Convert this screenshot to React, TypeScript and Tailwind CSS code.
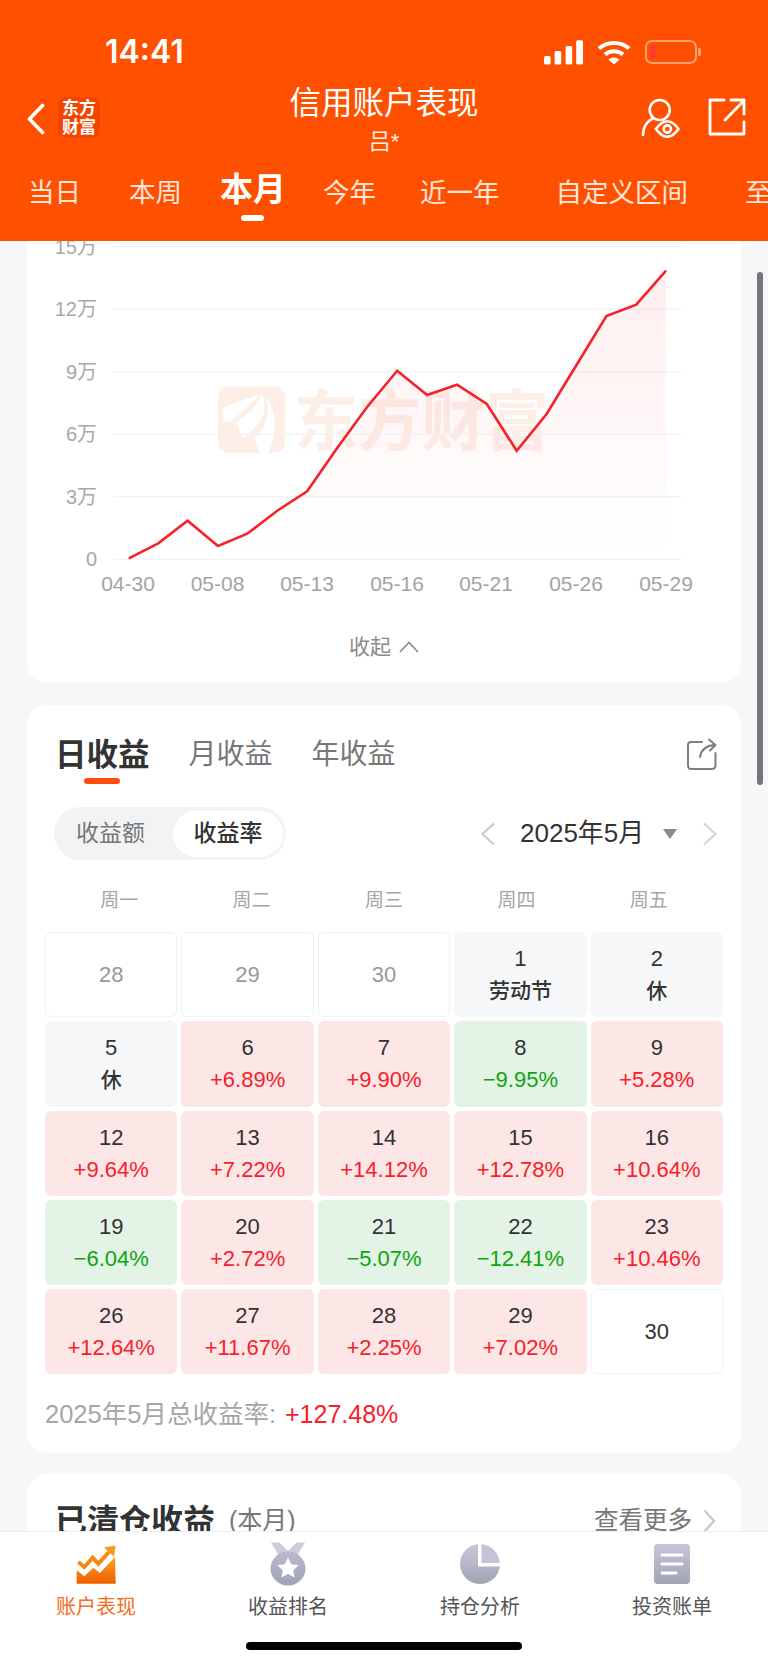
import React from 'react'

const pts: [number, number][] = [
  [101.8, 317.3], [131.2, 302.3], [160.6, 279.7], [191, 305], [220.3, 292.7], [250.2, 269.7], [280.1, 250.3],
  [310, 207.3], [340.3, 165.7], [370.2, 129.7], [400.1, 154], [430, 143.7], [459.8, 163], [489.7, 209.7],
  [519.6, 173], [549.5, 124], [579.4, 75], [609.2, 63.7], [639, 29.7],
]
const linePts = pts.map((p) => p.join(',')).join(' ')
const areaPts = `${linePts} 639,318.3 101.8,318.3`

const yAxis = [
  { label: '15万', y: 5.7 },
  { label: '12万', y: 68.3 },
  { label: '9万', y: 130.7 },
  { label: '6万', y: 193 },
  { label: '3万', y: 255.7 },
  { label: '0', y: 318.3 },
]
const xAxis = [
  { label: '04-30', x: 101 },
  { label: '05-08', x: 190.5 },
  { label: '05-13', x: 280 },
  { label: '05-16', x: 370 },
  { label: '05-21', x: 459 },
  { label: '05-26', x: 549 },
  { label: '05-29', x: 639 },
]

type Cell = { day: string; sub?: string; kind: 'prev' | 'off' | 'up' | 'down' | 'blank' }

const cells: Cell[] = [
  { day: '28', kind: 'prev' },
  { day: '29', kind: 'prev' },
  { day: '30', kind: 'prev' },
  { day: '1', sub: '劳动节', kind: 'off' },
  { day: '2', sub: '休', kind: 'off' },
  { day: '5', sub: '休', kind: 'off' },
  { day: '6', sub: '+6.89%', kind: 'up' },
  { day: '7', sub: '+9.90%', kind: 'up' },
  { day: '8', sub: '−9.95%', kind: 'down' },
  { day: '9', sub: '+5.28%', kind: 'up' },
  { day: '12', sub: '+9.64%', kind: 'up' },
  { day: '13', sub: '+7.22%', kind: 'up' },
  { day: '14', sub: '+14.12%', kind: 'up' },
  { day: '15', sub: '+12.78%', kind: 'up' },
  { day: '16', sub: '+10.64%', kind: 'up' },
  { day: '19', sub: '−6.04%', kind: 'down' },
  { day: '20', sub: '+2.72%', kind: 'up' },
  { day: '21', sub: '−5.07%', kind: 'down' },
  { day: '22', sub: '−12.41%', kind: 'down' },
  { day: '23', sub: '+10.46%', kind: 'up' },
  { day: '26', sub: '+12.64%', kind: 'up' },
  { day: '27', sub: '+11.67%', kind: 'up' },
  { day: '28', sub: '+2.25%', kind: 'up' },
  { day: '29', sub: '+7.02%', kind: 'up' },
  { day: '30', kind: 'blank' },
]

const topTabs = [
  { label: '当日', cls: 'ml-[28px] text-[26.5px] text-white/85' },
  { label: '本周', cls: 'ml-[48px] text-[26.5px] text-white/85' },
  { label: '本月', cls: 'ml-[38px] text-[33px] font-bold text-white -translate-y-[4px]' },
  { label: '今年', cls: 'ml-[37px] text-[26.5px] text-white/85' },
  { label: '近一年', cls: 'ml-[44px] text-[26.5px] text-white/85' },
  { label: '自定义区间', cls: 'ml-[56px] text-[26.5px] text-white/85' },
  { label: '至', cls: 'ml-[57px] text-[26.5px] text-white/85' },
]

function StatusIcons() {
  return (
    <div className="flex items-center">
      <svg width="40" height="25" viewBox="0 0 40 25" fill="#fff">
        <rect x="0" y="16" width="6.6" height="8.5" rx="1.6" />
        <rect x="10.6" y="11" width="6.6" height="13.5" rx="1.6" />
        <rect x="21.6" y="6" width="6.6" height="18.5" rx="1.6" />
        <rect x="32.2" y="0.3" width="6.8" height="24.2" rx="1.6" />
      </svg>
      <svg className="ml-[13px]" width="34" height="25" viewBox="0 0 34 25" fill="none" stroke="#fff" strokeWidth="4">
        <path d="M2 8.5C10 1 24 1 32 8.5" />
        <path d="M8 14.5C13 10 21 10 26 14.5" />
        <path d="M11.5 19.5Q17 15.5 22.5 19.5L17 24.5Z" fill="#fff" stroke="none" />
      </svg>
      <div className="ml-[14px] flex items-center">
        <div className="flex h-[24px] w-[52px] items-center rounded-[7px] border-2 border-white/45 pl-[3px]">
          <div className="h-[14px] w-[6px] rounded-[2px] bg-[#ff3b30]" />
        </div>
        <div className="ml-[1px] h-[8px] w-[3px] rounded-r-[2px] bg-white/45" />
      </div>
    </div>
  )
}

function Header() {
  return (
    <header className="h-[241px] flex-none overflow-hidden bg-[#ff5000] text-white">
      <div className="flex h-[80px] items-center justify-between pt-[24px] pl-[105px] pr-[67px]">
        <span className="font-['Inter',sans-serif] text-[32px] font-semibold">14:41</span>
        <StatusIcons />
      </div>
      <div className="grid h-[93px] grid-cols-[1fr_auto_1fr]">
        <div className="flex items-start pl-[27px] pt-[17px]">
          <svg className="mt-[6px]" width="18" height="32" viewBox="0 0 18 32" fill="none" stroke="#fff" strokeWidth="3.6" strokeLinecap="round" strokeLinejoin="round">
            <path d="M15.5 2.5L2.5 16L15.5 29.5" />
          </svg>
          <div className="ml-[13px] flex h-[41px] w-[42px] flex-col items-center justify-center rounded-[8px] bg-[#f24600] text-[17px] font-bold leading-[19px]">
            <span>东方</span>
            <span>财富</span>
          </div>
        </div>
        <div className="flex flex-col items-center">
          <div className="h-[46px] text-[31.5px] leading-[46px]">信用账户表现</div>
          <div className="mt-[2px] h-[28px] text-[22px] leading-[28px] text-white/90">吕*</div>
        </div>
        <div className="flex items-start justify-end pt-[18px] pr-[22px]">
          <svg width="40" height="40" viewBox="0 0 40 40" fill="none" stroke="#fff" strokeWidth="2.6" strokeLinecap="round">
            <circle cx="18.7" cy="12" r="10" />
            <path d="M2 37C2 29 6 23.5 11.5 20.5" />
            <path d="M15 31Q26.3 15.5 37.5 31Q26.3 46.5 15 31Z" fill="#ff5000" />
            <circle cx="26.3" cy="31" r="3.6" />
          </svg>
          <svg className="ml-[27px]" width="38" height="38" viewBox="0 0 38 38" fill="none" stroke="#fff" strokeWidth="2.8" strokeLinecap="round" strokeLinejoin="round">
            <path d="M16 2H2V36H36V24" />
            <path d="M17 22L36 2.5M23 2H36V16" />
          </svg>
        </div>
      </div>
      <div className="flex h-[42px] items-center whitespace-nowrap">
        {topTabs.map((t) => (
          <span key={t.label} className={`flex-none ${t.cls}`}>
            {t.label}
          </span>
        ))}
      </div>
      <div className="ml-[241px] h-[6px] w-[23px] rounded-full bg-white" />
    </header>
  )
}

function Chart() {
  return (
    <svg width="714" height="356" viewBox="0 0 714 356" className="block">
      <defs>
        <linearGradient id="area" x1="0" y1="0" x2="0" y2="1">
          <stop offset="0" stopColor="#f5222a" stopOpacity="0.075" />
          <stop offset="1" stopColor="#f5222a" stopOpacity="0" />
        </linearGradient>
      </defs>
      <rect x="191" y="145.7" width="67" height="66" rx="10" fill="#fdeee8" />
      <g fill="#fff">
        <path d="M196.3 167C210 160 225 156 233 154C222 165 210 175 203 181L196 180Z" />
        <path d="M235 153C240 165 240 180 216 197C212 190 210 183 211 180C222 172 232 163 235 153Z" />
        <path d="M238 154C250 170 252 195 238 218C232 210 228 203 228 197C240 185 244 170 238 154Z" />
      </g>
      <text x="267" y="204" fontSize="66" fontWeight="700" fill="#fdeee8" textLength="255" lengthAdjust="spacingAndGlyphs" fontFamily="'Noto Sans CJK SC', sans-serif">
        东方财富
      </text>
      {yAxis.map((t) => (
        <g key={t.label}>
          <line x1="86.6" x2="654" y1={t.y} y2={t.y} stroke="#f2f3f6" strokeWidth="1.5" />
          <text x="70" y={t.y + 7} fontSize="20" fill="#a8a8a8" textAnchor="end">
            {t.label}
          </text>
        </g>
      ))}
      <polygon points={areaPts} fill="url(#area)" />
      <polyline points={linePts} fill="none" stroke="#f5222a" strokeWidth="2.6" strokeLinejoin="miter" />
      {xAxis.map((t) => (
        <text key={t.label} x={t.x} y="350" fontSize="21" fill="#a3a3a3" textAnchor="middle">
          {t.label}
        </text>
      ))}
    </svg>
  )
}

function ChartCard() {
  return (
    <section className="mx-[27px] h-[442px] flex-none overflow-hidden rounded-b-[20px] bg-white">
      <Chart />
      <div className="mt-[35px] flex h-[30px] items-center justify-center text-[21px] text-[#8a8a8a]">
        <span>收起</span>
        <svg className="ml-[8px]" width="20" height="12" viewBox="0 0 20 12" fill="none" stroke="#8a8a8a" strokeWidth="1.6">
          <path d="M1 11L10 1.5L19 11" />
        </svg>
      </div>
    </section>
  )
}

function DayCell({ cell }: { cell: Cell }) {
  if (cell.kind === 'prev' || cell.kind === 'blank') {
    return (
      <div
        className={`flex items-center justify-center rounded-[6px] border border-[#f0f1f3] bg-white text-[22px] ${
          cell.kind === 'prev' ? 'text-[#999]' : 'text-[#333]'
        }`}
      >
        {cell.day}
      </div>
    )
  }
  const box = cell.kind === 'up' ? 'bg-[#fde6e6]' : cell.kind === 'down' ? 'bg-[#e3f3e5]' : 'bg-[#f6f7f9]'
  const sub =
    cell.kind === 'up'
      ? 'text-[#f7202b] text-[22px]'
      : cell.kind === 'down'
        ? 'text-[#0ea50e] text-[22px]'
        : 'text-[#333] text-[21px] font-medium'
  return (
    <div className={`flex flex-col items-center rounded-[6px] pt-[11px] ${box}`}>
      <span className="h-[32px] text-[22px] leading-[32px] text-[#333]">{cell.day}</span>
      <span className={`h-[32px] leading-[32px] ${sub}`}>{cell.sub}</span>
    </div>
  )
}

function CalendarCard() {
  return (
    <section className="mx-[27px] mt-[22px] h-[748px] flex-none rounded-[20px] bg-white px-[18px] pt-[30px]">
      <div className="flex h-[72px] items-start pl-[10px] pr-[6px]">
        <div className="flex flex-col items-center">
          <span className="h-[40px] text-[31.5px] font-bold leading-[40px] text-[#333]">日收益</span>
          <span className="mt-[3px] h-[6px] w-[36px] rounded-full bg-[#ff4d0d]" />
        </div>
        <span className="ml-[39px] h-[40px] text-[28px] leading-[40px] text-[#777]">月收益</span>
        <span className="ml-[39px] h-[40px] text-[28px] leading-[40px] text-[#777]">年收益</span>
        <svg className="ml-auto mt-[3px]" width="30" height="32" viewBox="0 0 30 32" fill="none" stroke="#7f7f7f" strokeWidth="2" strokeLinecap="round" strokeLinejoin="round">
          <path d="M15 4H4Q1 4 1 7V27Q1 31 4 31H25Q28.5 31 28.5 27V15" />
          <path d="M13 19C14 12 18 8 27 7M22 1.5L28.5 7L23 12.5" />
        </svg>
      </div>
      <div className="flex h-[53px] items-center pl-[9px]">
        <div className="flex h-[53px] w-[232px] items-center whitespace-nowrap rounded-full bg-[#f2f3f5] pl-[22px] pr-[3px] text-[23px]">
          <span className="text-[#777]">收益额</span>
          <span className="ml-[28px] flex h-[46px] w-[111px] items-center justify-center rounded-full bg-white font-medium text-[#333]">
            收益率
          </span>
        </div>
        <svg className="ml-[194px]" width="16" height="24" viewBox="0 0 16 24" fill="none" stroke="#c9c9c9" strokeWidth="2">
          <path d="M14 1.5L2.5 12L14 22.5" />
        </svg>
        <span className="ml-[24px] whitespace-nowrap text-[26px] text-[#333]">2025年5月</span>
        <span className="ml-[19px] h-0 w-0 border-x-[7px] border-t-[10px] border-x-transparent border-t-[#8a8a8a]" />
        <svg className="ml-[25px]" width="16" height="24" viewBox="0 0 16 24" fill="none" stroke="#d4d4d4" strokeWidth="2">
          <path d="M2 1.5L13.5 12L2 22.5" />
        </svg>
      </div>
      <div className="mt-[26px] grid h-[30px] grid-cols-5 px-[8px] text-center text-[19px] leading-[30px] text-[#a6a6a6]">
        {['周一', '周二', '周三', '周四', '周五'].map((w) => (
          <span key={w}>{w}</span>
        ))}
      </div>
      <div className="mt-[16px] grid auto-rows-[85.25px] grid-cols-5 gap-[4px]">
        {cells.map((c) => (
          <DayCell key={`${c.kind}-${c.day}`} cell={c} />
        ))}
      </div>
      <div className="mt-[22px] flex h-[36px] items-center text-[25.5px] text-[#a6a6a6]">
        <span>2025年5月总收益率:</span>
        <span className="ml-[9px] text-[25px] text-[#f7202b]">+127.48%</span>
      </div>
    </section>
  )
}

function ClosedCard() {
  return (
    <section className="mx-[27px] mt-[21px] h-[100px] flex-none rounded-t-[20px] bg-white pt-[27px] pl-[28px] pr-[25px]">
      <div className="flex h-[40px] items-center whitespace-nowrap">
        <span className="text-[32px] font-bold text-[#333]">已清仓收益</span>
        <span className="ml-[14px] text-[25px] text-[#777]">(本月)</span>
        <span className="ml-auto text-[24.5px] text-[#777]">查看更多</span>
        <svg className="ml-[11px]" width="13" height="24" viewBox="0 0 13 24" fill="none" stroke="#c9c9c9" strokeWidth="2.4">
          <path d="M1.5 1.5L11 12L1.5 22.5" />
        </svg>
      </div>
    </section>
  )
}

function TrendIcon() {
  return (
    <svg width="40" height="40" viewBox="0 0 40 40">
      <defs>
        <linearGradient id="trend" x1="0" y1="0" x2="0" y2="1">
          <stop offset="0" stopColor="#fba21f" />
          <stop offset="1" stopColor="#ee5f00" />
        </linearGradient>
      </defs>
      <path d="M0.7 26.3L8.3 32.3L17.3 23.7L24 29L39 13L39.7 39.7H0.7Z" fill="url(#trend)" />
      <path d="M2.3 18L8.3 23L16.7 13.7L22.3 19.7L33 8" fill="none" stroke="#f58a10" strokeWidth="4" />
      <path d="M28 3.5L39.5 1.5L38 12.5Z" fill="#fa9a14" />
    </svg>
  )
}

function MedalIcon() {
  return (
    <svg width="36" height="44" viewBox="0 0 36 44">
      <defs>
        <linearGradient id="medal" x1="0" y1="0" x2="0" y2="1">
          <stop offset="0" stopColor="#b9b9cb" />
          <stop offset="1" stopColor="#a2a2b6" />
        </linearGradient>
      </defs>
      <path d="M1 0.5H9.5L18 9L26.5 0.5H35L27 13.5L18 11L9 13.5Z" fill="#cbcbdd" />
      <ellipse cx="18" cy="26.5" rx="17.5" ry="17" fill="url(#medal)" />
      <path d="M18 15.5L21.3 22.3L28.6 23.2L23.2 28.3L24.6 35.6L18 32L11.4 35.6L12.8 28.3L7.4 23.2L14.7 22.3Z" fill="#fff" />
    </svg>
  )
}

function PieIcon() {
  return (
    <svg width="40" height="40" viewBox="0 0 40 40">
      <defs>
        <linearGradient id="pie" x1="0" y1="0" x2="0" y2="1">
          <stop offset="0" stopColor="#c9c9da" />
          <stop offset="1" stopColor="#a3a3b6" />
        </linearGradient>
      </defs>
      <path d="M18 0.1V22.5H39.9A20 20 0 1 1 18 0.1Z" fill="url(#pie)" />
      <path d="M21.5 0.3A20 20 0 0 1 39.8 19H21.5Z" fill="#c4c4d6" />
    </svg>
  )
}

function BillIcon() {
  return (
    <svg width="36" height="40" viewBox="0 0 36 40">
      <defs>
        <linearGradient id="bill" x1="0" y1="0" x2="0" y2="1">
          <stop offset="0" stopColor="#c6c6d8" />
          <stop offset="1" stopColor="#a3a3b6" />
        </linearGradient>
      </defs>
      <rect width="36" height="40" rx="4" fill="url(#bill)" />
      <path d="M8 11H28M8 20H28M8 29H22" stroke="#fff" strokeWidth="3" strokeLinecap="round" />
    </svg>
  )
}

const bottomTabs = [
  { label: '账户表现', icon: <TrendIcon />, cls: 'text-[#f76b1c]' },
  { label: '收益排名', icon: <MedalIcon />, cls: 'text-[#555]' },
  { label: '持仓分析', icon: <PieIcon />, cls: 'text-[#555]' },
  { label: '投资账单', icon: <BillIcon />, cls: 'text-[#555]' },
]

function BottomBar() {
  return (
    <footer className="flex h-[134px] flex-none flex-col border-t border-[#eeeeee] bg-white">
      <div className="mt-[10px] grid grid-cols-4">
        {bottomTabs.map((t) => (
          <div key={t.label} className="flex flex-col items-center">
            <div className="flex h-[44px] items-center justify-center">{t.icon}</div>
            <span className={`mt-[6px] h-[30px] text-[20px] leading-[30px] ${t.cls}`}>{t.label}</span>
          </div>
        ))}
      </div>
      <div className="mx-auto mt-[20px] h-[8px] w-[276px] rounded-full bg-black" />
    </footer>
  )
}

export default function App() {
  return (
    <div className="flex h-[1665px] w-[768px] flex-col overflow-hidden bg-[#f6f7f9] font-['Liberation_Sans','Noto_Sans_CJK_SC',sans-serif]">
      <Header />
      <main className="relative flex min-h-0 flex-1 flex-col overflow-hidden">
        <ChartCard />
        <CalendarCard />
        <ClosedCard />
        <div className="absolute right-[5px] top-[31px] h-[513px] w-[6px] rounded-full bg-[#77777b]" />
      </main>
      <BottomBar />
    </div>
  )
}
